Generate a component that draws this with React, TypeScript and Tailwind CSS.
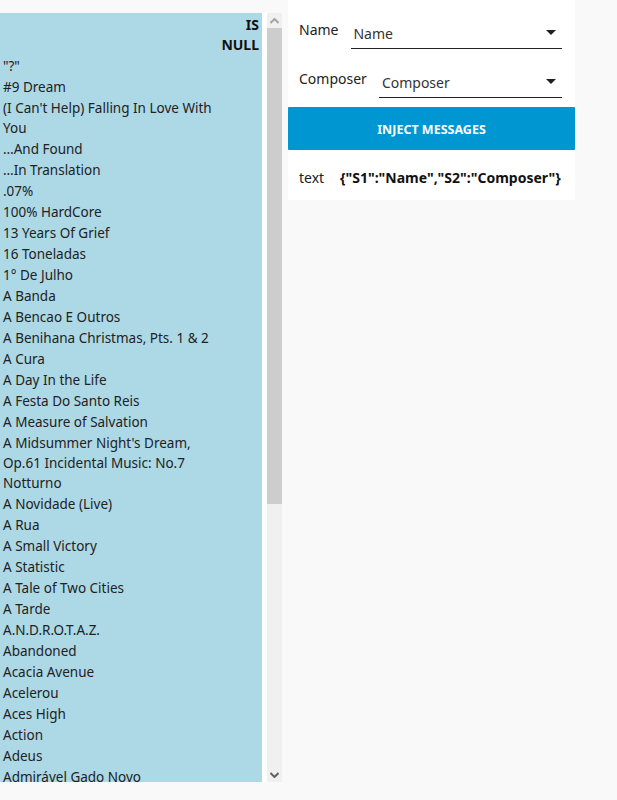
import React from "react";

const rows: string[][] = [
  ['"?"'],
  ["#9 Dream"],
  ["(I Can't Help) Falling In Love With", "You"],
  ["\u2026And Found"],
  ["\u2026In Translation"],
  [".07%"],
  ["100% HardCore"],
  ["13 Years Of Grief"],
  ["16 Toneladas"],
  ["1° De Julho"],
  ["A Banda"],
  ["A Bencao E Outros"],
  ["A Benihana Christmas, Pts. 1 & 2"],
  ["A Cura"],
  ["A Day In the Life"],
  ["A Festa Do Santo Reis"],
  ["A Measure of Salvation"],
  ["A Midsummer Night's Dream,", "Op.61 Incidental Music: No.7", "Notturno"],
  ["A Novidade (Live)"],
  ["A Rua"],
  ["A Small Victory"],
  ["A Statistic"],
  ["A Tale of Two Cities"],
  ["A Tarde"],
  ["A.N.D.R.O.T.A.Z."],
  ["Abandoned"],
  ["Acacia Avenue"],
  ["Acelerou"],
  ["Aces High"],
  ["Action"],
  ["Adeus"],
  ["Admirável Gado Novo"],
  ["Admirável Mundo Novo"],
  ["Aeroplane Flies High"],
];

function Caret() {
  return (
    <svg width="10" height="5" viewBox="0 0 10 5" className="shrink-0 mt-[-2px]">
      <path d="M0 0 L10 0 L5 5 Z" fill="#1f1f1f" />
    </svg>
  );
}

export default function App() {
  return (
    <div
      className="min-h-screen bg-[#f9f9f9] flex items-start text-[14px] text-[#222]"
      style={{ fontFamily: '"Segoe UI", "Noto Sans", sans-serif' }}
    >
      {/* left scroll list */}
      <div className="mt-[13px] h-[769px] w-[282px] bg-white flex shrink-0">
        <div className="w-[262px] h-full bg-[#add8e6] overflow-hidden">
          <div className="flex flex-col items-end pr-[3px] pt-[2px] font-bold leading-[20px] text-[#111]">
            <span>IS</span>
            <span>NULL</span>
          </div>
          <div className="flex flex-col pl-[3px] leading-[20px] text-[13.5px]">
            {rows.map((lines, i) => (
              <div key={i} className="whitespace-nowrap pt-[1px]">
                {lines.map((l, j) => (
                  <div key={j}>{l}</div>
                ))}
              </div>
            ))}
          </div>
        </div>
        <div className="w-[5px] h-full bg-white" />
        <div className="w-[15px] h-full bg-[#f0f0f0] flex flex-col">
          <div className="h-[15px] flex items-center justify-center">
            <svg width="9" height="6" viewBox="0 0 9 6">
              <path d="M0.5 5 L4.5 1 L8.5 5" stroke="#a3a3a3" strokeWidth="2" fill="none" />
            </svg>
          </div>
          <div className="h-[476px] bg-[#cdcdcd]" />
          <div className="flex-1" />
          <div className="h-[15px] flex items-center justify-center">
            <svg width="9" height="6" viewBox="0 0 9 6">
              <path d="M0.5 1 L4.5 5 L8.5 1" stroke="#606060" strokeWidth="2" fill="none" />
            </svg>
          </div>
        </div>
      </div>

      {/* right card */}
      <div className="ml-[6px] w-[287px] bg-white flex flex-col pb-[12px]">
        <div className="flex items-start pl-[11px] pr-[13px] pt-[20px]">
          <span className="leading-[20px] mr-[13px]">Name</span>
          <div className="flex-1 flex items-center border-b border-[#222] h-[29px] pb-[2px] pl-[2px] pr-[6px] text-[#333]">
            <span className="flex-1">Name</span>
            <Caret />
          </div>
        </div>
        <div className="flex items-start pl-[11px] pr-[13px] pt-[20px]">
          <span className="leading-[20px] mr-[12px]">Composer</span>
          <div className="flex-1 flex items-center border-b border-[#222] h-[29px] pb-[2px] pl-[3px] pr-[6px] text-[#333]">
            <span className="flex-1">Composer</span>
            <Caret />
          </div>
        </div>
        <button className="mt-[9px] h-[43px] pt-[3px] w-full bg-[#0096d1] rounded-[1px] text-white font-bold text-[12.5px] uppercase">
          INJECT MESSAGES
        </button>
        <div className="flex items-center pl-[11px] mt-[18px] leading-[20px]">
          <span className="w-[41px]">text</span>
          <span className="font-bold text-[#111]">{'{"S1":"Name","S2":"Composer"}'}</span>
        </div>
      </div>
    </div>
  );
}
